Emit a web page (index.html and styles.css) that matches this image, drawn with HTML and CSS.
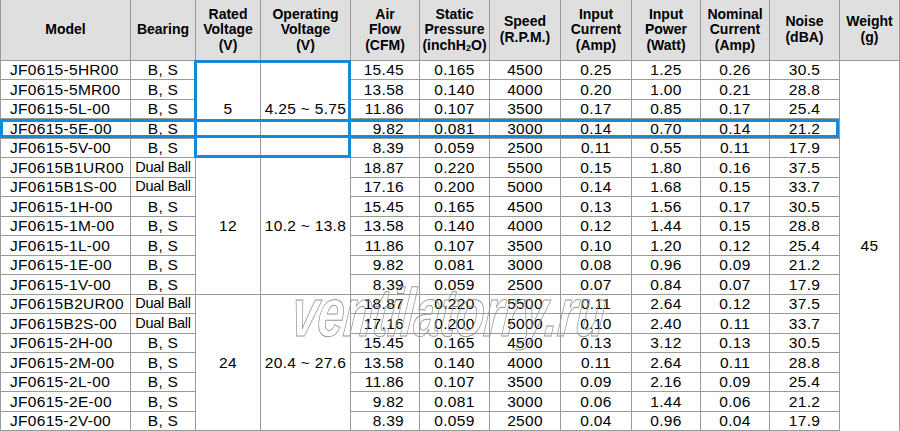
FILE: index.html
```html
<!DOCTYPE html>
<html lang="en">
<head>
<meta charset="utf-8">
<title>JF0615 fan specifications</title>
<link rel="stylesheet" href="styles.css">
</head>
<body>
<div class="sheet">
  <table class="spec">
    <colgroup>
      <col class="c-model"><col class="c-bear"><col class="c-rv"><col class="c-ov"><col class="c-air">
      <col class="c-sp"><col class="c-speed"><col class="c-ic"><col class="c-ip"><col class="c-nc">
      <col class="c-noise"><col class="c-w">
    </colgroup>
    <thead>
      <tr class="head">
        <th>Model</th>
        <th>Bearing</th>
        <th>Rated<br>Voltage<br>(V)</th>
        <th>Operating<br>Voltage<br>(V)</th>
        <th>Air<br>Flow<br>(CFM)</th>
        <th>Static<br>Pressure<br>(inchH<sub>2</sub>O)</th>
        <th>Speed<br>(R.P.M.)</th>
        <th>Input<br>Current<br>(Amp)</th>
        <th>Input<br>Power<br>(Watt)</th>
        <th>Nominal<br>Current<br>(Amp)</th>
        <th>Noise<br>(dBA)</th>
        <th>Weight<br>(g)</th>
      </tr>
    </thead>
    <tbody>
      <tr><td class="model">JF0615-5HR00</td><td>B, S</td><td rowspan="5">5</td><td rowspan="5">4.25 ~ 5.75</td><td class="air">15.45</td><td>0.165</td><td>4500</td><td>0.25</td><td>1.25</td><td>0.26</td><td>30.5</td><td class="weight" rowspan="19">45</td></tr>
      <tr><td class="model">JF0615-5MR00</td><td>B, S</td><td class="air">13.58</td><td>0.140</td><td>4000</td><td>0.20</td><td>1.00</td><td>0.21</td><td>28.8</td></tr>
      <tr><td class="model">JF0615-5L-00</td><td>B, S</td><td class="air">11.86</td><td>0.107</td><td>3500</td><td>0.17</td><td>0.85</td><td>0.17</td><td>25.4</td></tr>
      <tr><td class="model">JF0615-5E-00</td><td>B, S</td><td class="air">9.82</td><td>0.081</td><td>3000</td><td>0.14</td><td>0.70</td><td>0.14</td><td>21.2</td></tr>
      <tr><td class="model">JF0615-5V-00</td><td>B, S</td><td class="air">8.39</td><td>0.059</td><td>2500</td><td>0.11</td><td>0.55</td><td>0.11</td><td>17.9</td></tr>
      <tr><td class="model">JF0615B1UR00</td><td class="dual">Dual Ball</td><td rowspan="7">12</td><td rowspan="7">10.2 ~ 13.8</td><td class="air">18.87</td><td>0.220</td><td>5500</td><td>0.15</td><td>1.80</td><td>0.16</td><td>37.5</td></tr>
      <tr><td class="model">JF0615B1S-00</td><td class="dual">Dual Ball</td><td class="air">17.16</td><td>0.200</td><td>5000</td><td>0.14</td><td>1.68</td><td>0.15</td><td>33.7</td></tr>
      <tr><td class="model">JF0615-1H-00</td><td>B, S</td><td class="air">15.45</td><td>0.165</td><td>4500</td><td>0.13</td><td>1.56</td><td>0.17</td><td>30.5</td></tr>
      <tr><td class="model">JF0615-1M-00</td><td>B, S</td><td class="air">13.58</td><td>0.140</td><td>4000</td><td>0.12</td><td>1.44</td><td>0.15</td><td>28.8</td></tr>
      <tr><td class="model">JF0615-1L-00</td><td>B, S</td><td class="air">11.86</td><td>0.107</td><td>3500</td><td>0.10</td><td>1.20</td><td>0.12</td><td>25.4</td></tr>
      <tr><td class="model">JF0615-1E-00</td><td>B, S</td><td class="air">9.82</td><td>0.081</td><td>3000</td><td>0.08</td><td>0.96</td><td>0.09</td><td>21.2</td></tr>
      <tr><td class="model">JF0615-1V-00</td><td>B, S</td><td class="air">8.39</td><td>0.059</td><td>2500</td><td>0.07</td><td>0.84</td><td>0.07</td><td>17.9</td></tr>
      <tr><td class="model">JF0615B2UR00</td><td class="dual">Dual Ball</td><td rowspan="7">24</td><td rowspan="7">20.4 ~ 27.6</td><td class="air">18.87</td><td>0.220</td><td>5500</td><td>0.11</td><td>2.64</td><td>0.12</td><td>37.5</td></tr>
      <tr><td class="model">JF0615B2S-00</td><td class="dual">Dual Ball</td><td class="air">17.16</td><td>0.200</td><td>5000</td><td>0.10</td><td>2.40</td><td>0.11</td><td>33.7</td></tr>
      <tr><td class="model">JF0615-2H-00</td><td>B, S</td><td class="air">15.45</td><td>0.165</td><td>4500</td><td>0.13</td><td>3.12</td><td>0.13</td><td>30.5</td></tr>
      <tr><td class="model">JF0615-2M-00</td><td>B, S</td><td class="air">13.58</td><td>0.140</td><td>4000</td><td>0.11</td><td>2.64</td><td>0.11</td><td>28.8</td></tr>
      <tr><td class="model">JF0615-2L-00</td><td>B, S</td><td class="air">11.86</td><td>0.107</td><td>3500</td><td>0.09</td><td>2.16</td><td>0.09</td><td>25.4</td></tr>
      <tr><td class="model">JF0615-2E-00</td><td>B, S</td><td class="air">9.82</td><td>0.081</td><td>3000</td><td>0.06</td><td>1.44</td><td>0.06</td><td>21.2</td></tr>
      <tr><td class="model">JF0615-2V-00</td><td>B, S</td><td class="air">8.39</td><td>0.059</td><td>2500</td><td>0.04</td><td>0.96</td><td>0.04</td><td>17.9</td></tr>
    </tbody>
  </table>
  <div class="hl hl-volt"></div>
  <div class="hl hl-row"></div>
  <div class="watermark">ventilatorry.ru</div>
</div>
</body>
</html>
```

FILE: styles.css
```css
html, body {
  margin: 0;
  padding: 0;
  background: #ffffff;
}

body {
  font-family: "Liberation Sans", Arial, sans-serif;
  color: #000000;
  overflow: hidden;
}

.sheet {
  position: relative;
  width: 900px;
  height: 431px;
  overflow: hidden;
}

.spec {
  border-collapse: collapse;
  table-layout: fixed;
  width: 899px;
}

.spec th,
.spec td {
  border: 1px solid #9a9a9a;
  padding: 0;
  text-align: center;
  vertical-align: middle;
  white-space: nowrap;
  overflow: hidden;
}

.c-model { width: 130px; }
.c-bear { width: 65px; }
.c-rv { width: 65px; }
.c-ov { width: 90px; }
.c-air { width: 69px; }
.c-sp { width: 70px; }
.c-speed { width: 71px; }
.c-ic { width: 71px; }
.c-ip { width: 69px; }
.c-nc { width: 69px; }
.c-noise { width: 70px; }
.c-w { width: 60px; }

.head {
  height: 60px;
}

.head th {
  background: #dfdfdf;
  font-size: 14px;
  font-weight: bold;
  line-height: 15.5px;
  border-top: none;
}

.head th sub {
  font-size: 9px;
  vertical-align: -1px;
  line-height: 0;
}

.spec tbody tr {
  height: 19.5px;
}

.spec td {
  font-size: 15.5px;
  letter-spacing: 0.3px;
  line-height: 17px;
}

.spec td.model {
  text-align: left;
  padding-left: 9px;
}

.spec td.dual {
  font-size: 14.5px;
  letter-spacing: -0.3px;
}

.spec td.air {
  text-align: right;
  padding-right: 15px;
}

.spec td.weight {
  border-bottom: none;
}

.hl {
  position: absolute;
  border: 3px solid #158ad8;
  pointer-events: none;
}

.hl-volt {
  left: 194px;
  top: 60px;
  width: 151px;
  height: 92px;
}

.hl-row {
  left: 0;
  top: 119px;
  width: 833px;
  height: 13px;
}

.watermark {
  position: absolute;
  left: 290px;
  top: 272px;
  font-family: "Liberation Sans", Arial, sans-serif;
  font-style: italic;
  font-weight: bold;
  font-size: 68px;
  line-height: 80px;
  letter-spacing: -0.5px;
  color: transparent;
  -webkit-text-stroke: 1px #969696;
  transform: scaleX(0.7) skewX(-8deg);
  transform-origin: left 64px;
  pointer-events: none;
  white-space: nowrap;
}
```
